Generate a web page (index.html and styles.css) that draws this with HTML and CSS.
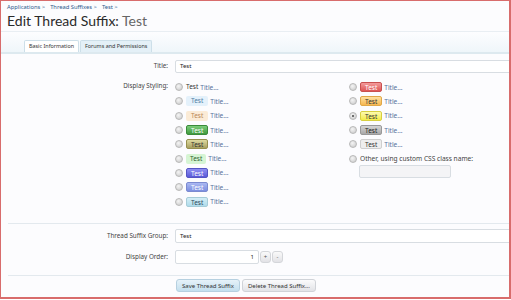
FILE: index.html
```html
<!DOCTYPE html>
<html lang="en">
  <head>
    <meta charset="UTF-8" />
    <title>Edit Thread Suffix: Test</title>
    <link rel="stylesheet" href="styles.css">
  </head>
  <body>
    <div class="page">
      <div class="header">
        <div class="breadcrumb">
          <span>Applications &gt;</span>
          <span>Thread Suffixes &gt;</span>
          <span>Test &gt;</span>
        </div>
        <h1 class="title">Edit Thread Suffix: <span class="muted">Test</span></h1>
      </div>

      <div class="tab-bar">
        <div class="tab active">Basic Information</div>
        <div class="tab">Forums and Permissions</div>
      </div>

      <div class="form">
        <div class="row row-title">
          <label class="label">Title:</label>
          <div class="control"><div class="input wide">Test</div></div>
        </div>

        <div class="row row-styling">
          <label class="label">Display Styling:</label>
          <div class="control styling">
            <div class="col">
              <div class="opt"><span class="radio"></span><span class="sfx plain">Test</span><span class="ttl">Title...</span></div>
              <div class="opt"><span class="radio"></span><span class="sfx s-lightblue">Test</span><span class="ttl">Title...</span></div>
              <div class="opt"><span class="radio"></span><span class="sfx s-peach">Test</span><span class="ttl">Title...</span></div>
              <div class="opt"><span class="radio"></span><span class="sfx s-green">Test</span><span class="ttl">Title...</span></div>
              <div class="opt"><span class="radio"></span><span class="sfx s-olive">Test</span><span class="ttl">Title...</span></div>
              <div class="opt"><span class="radio"></span><span class="sfx s-mint">Test</span><span class="ttl">Title...</span></div>
              <div class="opt"><span class="radio"></span><span class="sfx s-violet">Test</span><span class="ttl">Title...</span></div>
              <div class="opt"><span class="radio"></span><span class="sfx s-periwinkle">Test</span><span class="ttl">Title...</span></div>
              <div class="opt"><span class="radio"></span><span class="sfx s-cyan">Test</span><span class="ttl">Title...</span></div>
            </div>
            <div class="col">
              <div class="opt"><span class="radio"></span><span class="sfx s-red">Test</span><span class="ttl">Title...</span></div>
              <div class="opt"><span class="radio"></span><span class="sfx s-orange">Test</span><span class="ttl">Title...</span></div>
              <div class="opt"><span class="radio checked"></span><span class="sfx s-yellow">Test</span><span class="ttl">Title...</span></div>
              <div class="opt"><span class="radio"></span><span class="sfx s-gray">Test</span><span class="ttl">Title...</span></div>
              <div class="opt"><span class="radio"></span><span class="sfx s-silver">Test</span><span class="ttl">Title...</span></div>
              <div class="opt"><span class="radio"></span><span class="other">Other, using custom CSS class name:</span></div>
              <div class="input custom"></div>
            </div>
          </div>
        </div>

        <div class="divider"></div>

        <div class="row row-group">
          <label class="label">Thread Suffix Group:</label>
          <div class="control"><div class="input wide">Test</div></div>
        </div>

        <div class="row row-order">
          <label class="label">Display Order:</label>
          <div class="control spinner">
            <div class="input number">1</div>
            <span class="spin">+</span>
            <span class="spin">-</span>
          </div>
        </div>

        <div class="divider"></div>

        <div class="buttons">
          <span class="button primary">Save Thread Suffix</span>
          <span class="button">Delete Thread Suffix...</span>
        </div>
      </div>
    </div>
  </body>
</html>
```

FILE: styles.css
```css
/* ---- RESET ---- */
* {
  padding: 0;
  margin: 0;
  box-sizing: border-box;
}

body {
  background: #ffffff;
  font-family: "Noto Sans", "DejaVu Sans", sans-serif;
  font-size: 6.5px;
  color: #333;
}

.page {
  width: 511px;
  height: 299px;
  border: 1px solid #d86c6c;
  border-right-width: 2px;
  border-bottom-width: 2px;
  background: #fcfcfe;
  overflow: hidden;
}

/* ---- HEADER ---- */
.header {
  padding: 2px 6px 0;
  height: 31px;
  border-bottom: 1px solid #e9eef3;
}

.breadcrumb {
  display: flex;
  gap: 5px;
  font-size: 5.8px;
  color: #2e5a8c;
  height: 9px;
  line-height: 8px;
}

.title {
  font-family: Lato, "Noto Sans", sans-serif;
  font-weight: normal;
  font-size: 14px;
  line-height: 18px;
  color: #2a2a2a;
}

.title .muted {
  color: #666;
}

/* ---- TABS ---- */
.tab-bar {
  display: flex;
  align-items: flex-end;
  gap: 1px;
  height: 22px;
  padding-left: 23px;
  background: linear-gradient(#fdfdff, #eff6fa);
  border-bottom: 2px solid #dde9ef;
}

.tab {
  height: 12px;
  padding: 0 4px;
  line-height: 11px;
  font-size: 5.4px;
  white-space: nowrap;
  color: #333;
  background: #e4f0f7;
  border: 1px solid #cddfe9;
  border-bottom: none;
  border-radius: 2px 2px 0 0;
}

.tab.active {
  background: #ffffff;
}

/* ---- FORM ---- */
.form {
  padding-top: 6px;
}

.row {
  display: grid;
  grid-template-columns: 167px 1fr;
  column-gap: 7px;
}

.label {
  text-align: right;
  color: #444;
  font-size: 6.3px;
  line-height: 12px;
}

.input {
  height: 13px;
  background: #ffffff;
  border: 1px solid #d8dde2;
  border-radius: 2px;
  padding: 0 4px;
  font-size: 6px;
  line-height: 11px;
  color: #222;
}

.input.wide {
  margin-right: -4px;
}

.row-title {
  height: 20px;
}

/* ---- DISPLAY STYLING ---- */
.row-styling .label {
  line-height: 11px;
}

.styling {
  display: grid;
  grid-template-columns: 174px 1fr;
}

.opt {
  display: flex;
  align-items: center;
  height: 14.3px;
}

.radio {
  width: 8px;
  height: 8px;
  border-radius: 50%;
  background: radial-gradient(circle at 40% 35%, #f4f4f4, #c8c8c8);
  border: 1px solid #b8b8b8;
  margin-right: 3px;
  position: relative;
}

.radio.checked::after {
  content: "";
  position: absolute;
  left: 2px;
  top: 2px;
  width: 2px;
  height: 2px;
  border-radius: 50%;
  background: #444;
}

.sfx {
  display: inline-block;
  height: 10px;
  line-height: 9px;
  padding: 0 4px;
  font-size: 6.5px;
  border-radius: 2px;
  margin-right: 2px;
  color: #333;
}

.sfx.plain {
  padding: 0;
  margin-right: 2px;
}

.ttl {
  color: #56709a;
  font-size: 6.5px;
}

.s-lightblue { background: #e4f1fb; color: #4f7ea4; padding: 0 5px; }
.s-peach { background: #fbebd6; color: #b98757; padding: 0 5px; }
.s-green { background: linear-gradient(#7ccd7a, #3f9a3f); color: #fff; border: 1px solid #3a8a3a; }
.s-olive { background: linear-gradient(#dedaa0, #a8a060); color: #333; border: 1px solid #96904e; }
.s-mint { background: #d6f5d4; color: #2f5e2f; }
.s-violet { background: linear-gradient(#8f8ff2, #5a5ad8); color: #fff; border: 1px solid #5555c4; }
.s-periwinkle { background: linear-gradient(#aab8f2, #7c8fe0); color: #fff; border: 1px solid #7b8ad0; }
.s-cyan { background: linear-gradient(#d4eef6, #afdbea); color: #2e4a5c; border: 1px solid #a6ccd8; }
.s-red { background: linear-gradient(#f39a9a, #de5555); color: #fff; border: 1px solid #c85050; }
.s-orange { background: linear-gradient(#fde0a0, #f6b750); color: #333; border: 1px solid #e0a848; }
.s-yellow { background: linear-gradient(#fdfab0, #f4ec48); color: #333; border: 1px solid #d8d040; }
.s-gray { background: linear-gradient(#d4d4d4, #a8a8a8); color: #222; border: 1px solid #999; }
.s-silver { background: #eeeeee; color: #333; border: 1px solid #cfcfcf; }

.other {
  color: #444;
  font-size: 6.6px;
}

.input.custom {
  width: 92px;
  height: 13px;
  margin-left: 10px;
  margin-top: -1px;
  background: #f4f4f6;
}

/* ---- LOWER ---- */
.divider {
  height: 1px;
  background: #e3e9ee;
  margin-left: 7px;
}

.row-styling {
  height: 143px;
}

.row-group {
  margin-top: 5px;
  height: 21px;
}

.row-group .label,
.row-order .label {
  line-height: 14px;
}

.row-group .input,
.row-order .input {
  height: 14px;
  line-height: 12px;
}

.row-order {
  height: 25px;
}

.spinner {
  display: flex;
  gap: 1px;
}

.input.number {
  width: 84px;
  text-align: right;
}

.spin {
  width: 11px;
  height: 12px;
  margin-top: 1px;
  border-radius: 3px;
  background: linear-gradient(#fafafa, #e2e2e6);
  border: 1px solid #d4d6da;
  font-size: 6px;
  line-height: 10px;
  text-align: center;
  color: #555;
}

.buttons {
  display: flex;
  gap: 2px;
  padding-left: 175px;
  padding-top: 3px;
}

.button {
  height: 13px;
  padding: 0 5px;
  line-height: 12px;
  font-size: 6px;
  color: #333;
  border-radius: 3px;
  background: linear-gradient(#fbfbfc, #e2e3e7);
  border: 1px solid #d0d3d8;
}

.button.primary {
  background: linear-gradient(#e6f2f9, #c3dfee);
  border-color: #b6d0e0;
}
```
